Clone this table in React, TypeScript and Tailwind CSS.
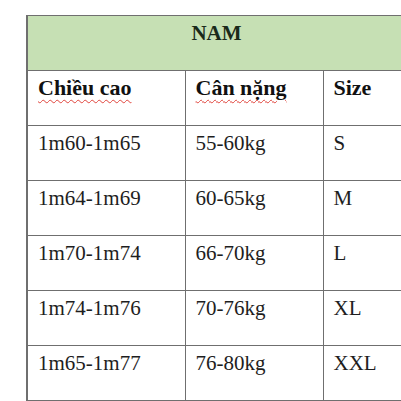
const rows = [
  ['1m60-1m65', '55-60kg', 'S'],
  ['1m64-1m69', '60-65kg', 'M'],
  ['1m70-1m74', '66-70kg', 'L'],
  ['1m74-1m76', '70-76kg', 'XL'],
  ['1m65-1m77', '76-80kg', 'XXL'],
];

const cell = 'h-[55px] border border-[#6f6f6f] px-[10px] pt-[5px] align-top';

function edge(i: number) {
  if (i === 0) return 'border-l-2';
  if (i === 2) return 'border-r-0';
  return '';
}

export default function App() {
  return (
    <div className="w-[401px] h-[401px] overflow-hidden bg-white pl-[26px] pt-[15px] font-['Liberation_Serif','Times_New_Roman',serif] text-[21px] leading-[24px] text-[#1e1e1e]">
      <table className="w-[384px] table-fixed border-collapse">
        <colgroup>
          <col className="w-[158px]" />
          <col className="w-[138px]" />
          <col className="w-[88px]" />
        </colgroup>
        <thead>
          <tr>
            <th colSpan={3} className={`${cell} border-l-2 border-r-0 bg-[#c6e0b4] pr-[16px] text-center font-bold text-[#1a2a1a]`}>
              NAM
            </th>
          </tr>
          <tr>
            {['Chiều cao', 'Cân nặng', 'Size'].map((h, i) => (
              <th key={h} className={`${cell} ${edge(i)} text-left text-[22px] font-bold text-[#111]`}>
                <span
                  className={
                    i < 2
                      ? 'underline decoration-wavy decoration-[#e0443c] decoration-1 underline-offset-[4px]'
                      : ''
                  }
                >
                  {h}
                </span>
              </th>
            ))}
          </tr>
        </thead>
        <tbody>
          {rows.map((r) => (
            <tr key={r[0]}>
              {r.map((v, i) => (
                <td key={i} className={`${cell} ${edge(i)}`}>
                  {v}
                </td>
              ))}
            </tr>
          ))}
        </tbody>
      </table>
    </div>
  );
}
